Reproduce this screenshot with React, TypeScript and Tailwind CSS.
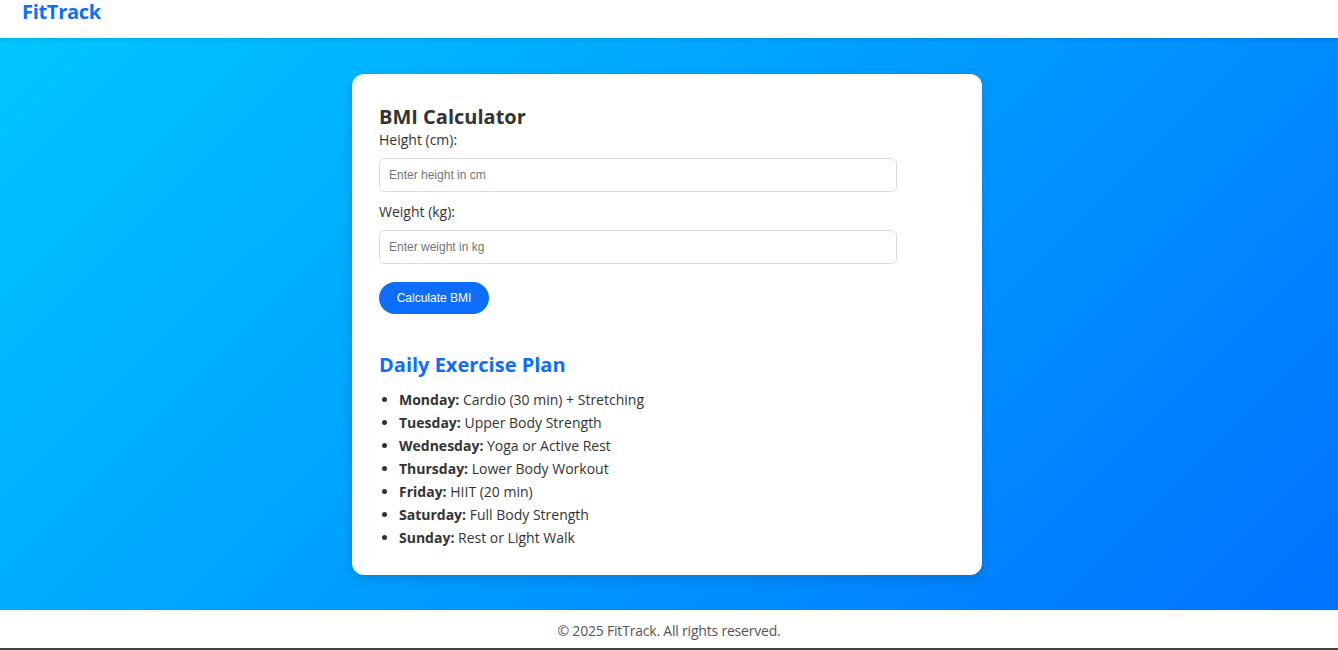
export default function App() {
  const plan = [
    ["Monday:", "Cardio (30 min) + Stretching"],
    ["Tuesday:", "Upper Body Strength"],
    ["Wednesday:", "Yoga or Active Rest"],
    ["Thursday:", "Lower Body Workout"],
    ["Friday:", "HIIT (20 min)"],
    ["Saturday:", "Full Body Strength"],
    ["Sunday:", "Rest or Light Walk"],
  ];

  return (
    <div className="min-h-[650px] flex flex-col text-[#333] font-['Open_Sans',sans-serif]">
      {/* HEADER */}
      <header className="h-[38px] bg-white shadow-[0_2px_4px_rgba(0,0,0,0.1)] px-[22px] relative z-10">
        <h1 className="text-[20px] leading-[24px] font-bold text-[#0d6efd] tracking-[-0.3px]">FitTrack</h1>
      </header>

      {/* MAIN */}
      <main className="flex-1 bg-linear-135/srgb from-[#00c6ff] to-[#0072ff] flex justify-center pt-9 pb-[35px] pr-1">
        <div className="w-[630px] bg-white rounded-xl shadow-[0_4px_12px_rgba(0,0,0,0.15)] px-[27px] pt-[27px] pb-[26px]">
          <h2 className="mt-[2px] text-[20px] leading-[28px] font-bold text-[#333]">BMI Calculator</h2>

          <label className="block text-[14px] leading-[19px] -mt-px">Height (cm):</label>
          <input
            type="number"
            placeholder="Enter height in cm"
            className="block w-[90%] h-[34px] mt-[9px] px-[9px] border border-[#ddd] rounded-[5px] text-[12px] font-['Liberation_Sans',sans-serif] placeholder:text-[#757575] outline-none"
          />

          <label className="block text-[14px] leading-[19px] mt-[10px]">Weight (kg):</label>
          <input
            type="number"
            placeholder="Enter weight in kg"
            className="block w-[90%] h-[34px] mt-[9px] px-[9px] border border-[#ddd] rounded-[5px] text-[12px] font-['Liberation_Sans',sans-serif] placeholder:text-[#757575] outline-none"
          />

          <button className="mt-[18px] h-[32px] w-[110px] rounded-full bg-[#0d6efd] text-white text-[12px] font-['Liberation_Sans',sans-serif]">
            Calculate BMI
          </button>

          <h2 className="mt-[37px] text-[20px] leading-[28px] font-bold text-[#0d6efd]">Daily Exercise Plan</h2>

          <ul className="mt-[9px] list-disc pl-[20px] text-[14px] leading-[23px]">
            {plan.map(([day, task]) => (
              <li key={day}>
                <strong className="font-bold">{day}</strong> {task}
              </li>
            ))}
          </ul>
        </div>
      </main>

      {/* FOOTER */}
      <footer className="h-[40px] bg-white border-b-2 border-[#444] flex items-center justify-center pt-0.5 text-[14px] tracking-[-0.2px] text-[#555]">
        © 2025 FitTrack. All rights reserved.
      </footer>
    </div>
  );
}
